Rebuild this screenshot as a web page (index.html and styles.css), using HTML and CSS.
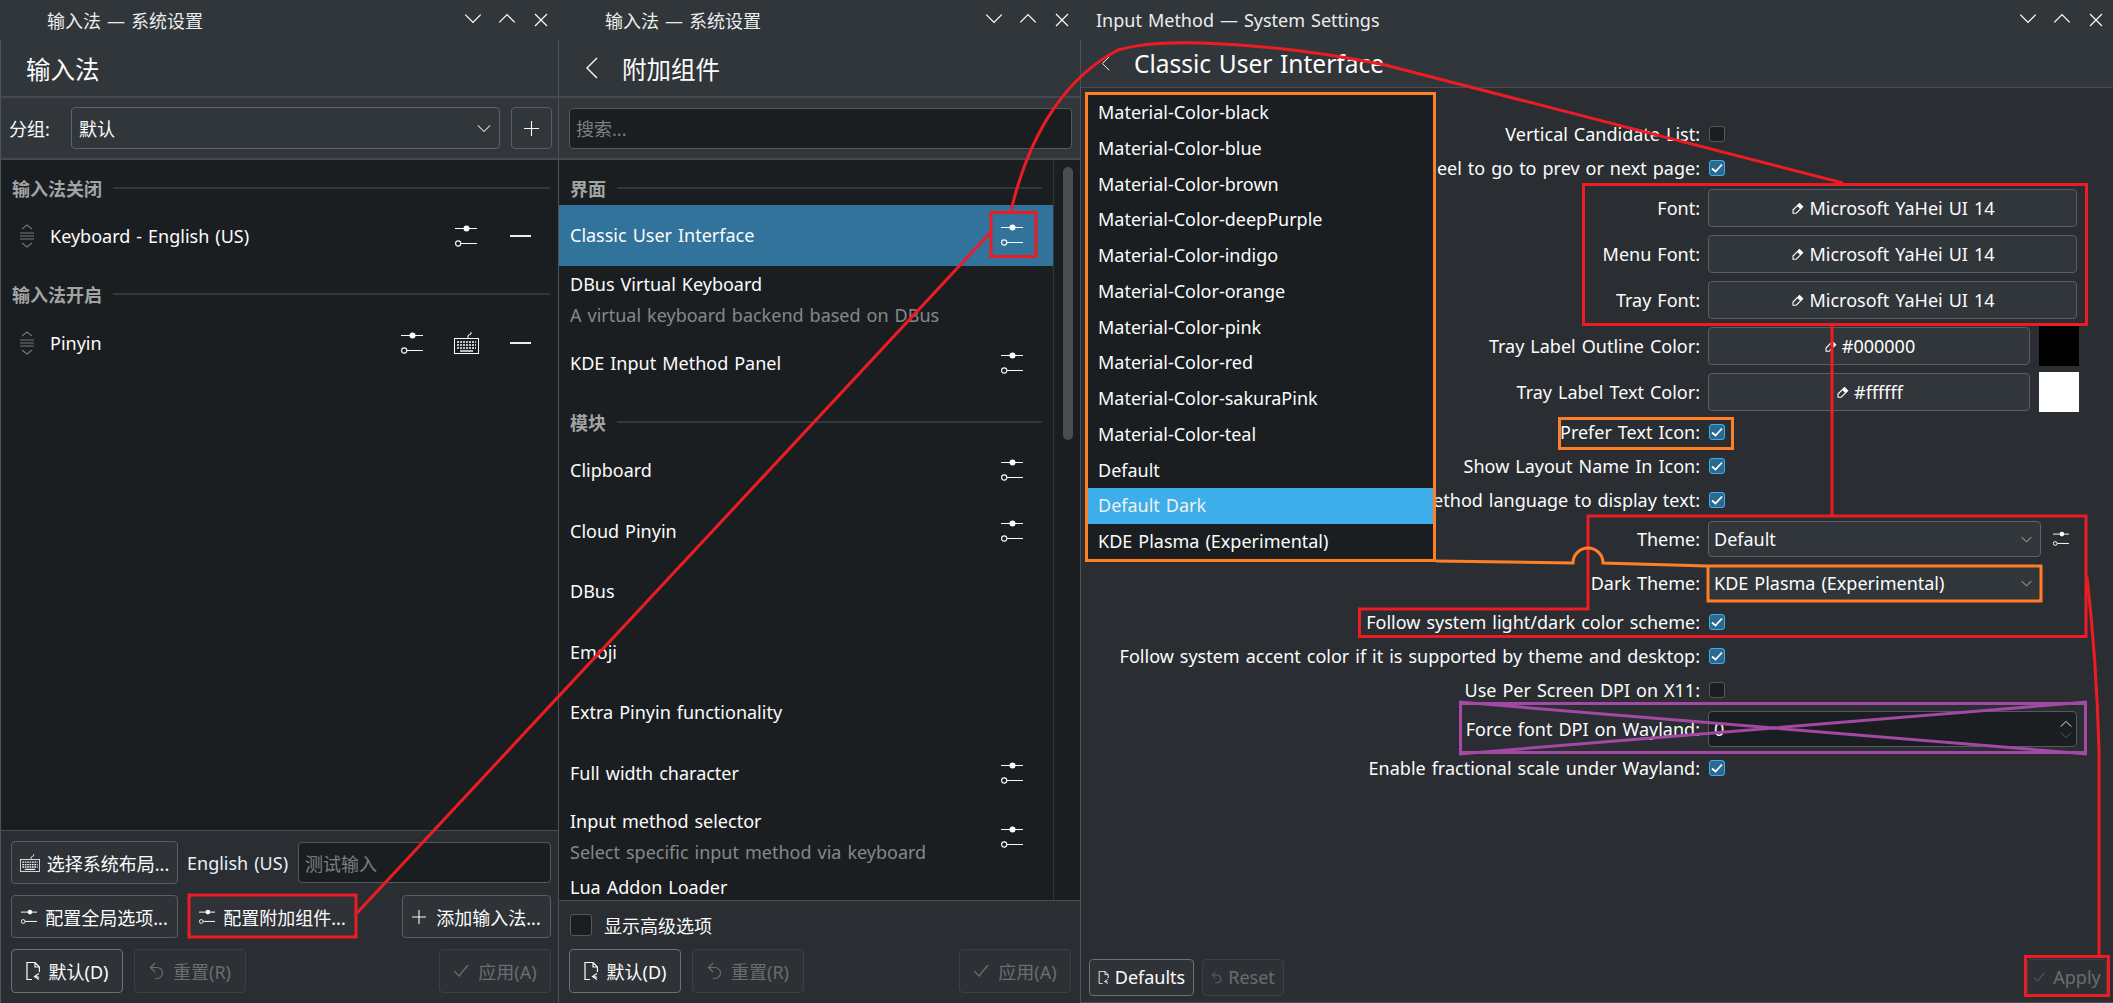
FILE: index.html
```html
<!DOCTYPE html>
<html lang="zh">
<head>
    <meta charset="utf-8">
    <title>Input Method — System Settings</title>
    <link rel="stylesheet" href="styles.css">
</head>

<body>
    <svg class="defs" width="0" height="0">
        <symbol id="i-down" viewBox="0 0 16 10"><path d="M1 1.5l7 7 7-7" fill="none" stroke="currentColor" stroke-width="1.2"/></symbol>
        <symbol id="i-up" viewBox="0 0 16 10"><path d="M1 8.5l7-7 7 7" fill="none" stroke="currentColor" stroke-width="1.2"/></symbol>
        <symbol id="i-close" viewBox="0 0 14 14"><path d="M1 1l12 12M13 1L1 13" fill="none" stroke="currentColor" stroke-width="1.2"/></symbol>
        <symbol id="i-back" viewBox="0 0 13 22"><path d="M12 1L2 11l10 10" fill="none" stroke="currentColor" stroke-width="1.4"/></symbol>
        <symbol id="i-config" viewBox="0 0 22 22"><path d="M0 3.5h22M6 18.5h16" stroke="currentColor" stroke-width="1.1" fill="none"/><circle cx="11.5" cy="3.5" r="3" fill="currentColor"/><circle cx="3.2" cy="18.5" r="2.6" fill="none" stroke="currentColor" stroke-width="1.1"/></symbol>
        <symbol id="i-config-s" viewBox="0 0 18 18"><path d="M6 3.5h12M0 3.5h6M4.5 14h13.5" stroke="currentColor" stroke-width="1.1" fill="none"/><circle cx="10" cy="3.5" r="2.6" fill="currentColor"/><circle cx="2.5" cy="14" r="2.1" fill="none" stroke="currentColor" stroke-width="1.1"/></symbol>
        <symbol id="i-kbd" viewBox="0 0 25 22"><path d="M14 6V3.5L17 2V0" fill="none" stroke="currentColor" stroke-width="1"/><rect x=".5" y="6.5" width="24" height="15" fill="none" stroke="currentColor"/><path d="M3 10h19M3 13h19M3 16h19" stroke="currentColor" stroke-width="1.6" stroke-dasharray="2 1" fill="none"/><path d="M6 19h13" stroke="currentColor" stroke-width="1.4"/></symbol>
        <symbol id="i-handle" viewBox="0 0 14 24"><path d="M2 5l5-4 5 4M2 19l5 4 5-4M0 9h14M0 12h14M0 15h14" fill="none" stroke="currentColor" stroke-width="1.1"/></symbol>
        <symbol id="i-plus" viewBox="0 0 16 16"><path d="M8 0v16M0 8h16" stroke="currentColor" stroke-width="1.2"/></symbol>
        <symbol id="i-revert" viewBox="0 0 14 18"><path d="M6 17.5H1V.5h8l4.5 4.5v5M9 .5V5h4.5" fill="none" stroke="currentColor" stroke-width="1.2"/><path d="M13 11.5l-4.5 3 4.5 3M8.8 14.5c2.2 0 3.5 0 4.2 1" fill="none" stroke="currentColor" stroke-width="1.1"/></symbol>
        <symbol id="i-undo" viewBox="0 0 15 18"><path d="M6 1L1.5 5.5 6 10M2 5.5h6a5.5 5.5 0 0 1 0 11H6" fill="none" stroke="currentColor" stroke-width="1.2"/></symbol>
        <symbol id="i-ok" viewBox="0 0 16 13"><path d="M1 7l5 5L15 1" fill="none" stroke="currentColor" stroke-width="1.2"/></symbol>
        <symbol id="i-pen" viewBox="0 0 12 12"><path d="M1 8l6.5-6.5 3.2 3.2L4.2 11.2H1z" fill="none" stroke="currentColor" stroke-width="1.1"/><path d="M5 3.8l3.2 3.2 2.5-2.5-3.2-3.2z" fill="currentColor"/></symbol>
        <symbol id="i-tick" viewBox="0 0 12 10"><path d="M1 5.5l3.5 3L11 1.5" fill="none" stroke="currentColor" stroke-width="1.8"/></symbol>
    </svg>

    <div class="desktop">
        <!-- window 1 -->
        <section class="win win-main">
            <header class="titlebar">
                <span class="title">输入法 — 系统设置</span>
                <div class="ctrls">
                    <svg class="ctrl"><use href="#i-down"/></svg>
                    <svg class="ctrl"><use href="#i-up"/></svg>
                    <svg class="ctrl ctrl_x"><use href="#i-close"/></svg>
                </div>
            </header>
            <div class="body body-left">
                <div class="page-head"><h1 class="heading">输入法</h1></div>
                <div class="tool-row group-row">
                    <span class="group-label">分组:</span>
                    <div class="combo combo-group"><span>默认</span><svg class="combo-arrow"><use href="#i-down"/></svg></div>
                    <button class="btn btn-square"><svg class="i-plus"><use href="#i-plus"/></svg></button>
                </div>
                <div class="list">
                    <div class="section section-first"><span>输入法关闭</span><i></i></div>
                    <div class="row im-row">
                        <svg class="handle"><use href="#i-handle"/></svg>
                        <span class="row-name">Keyboard - English (US)</span>
                        <span class="row-icon"><svg class="cfg"><use href="#i-config"/></svg></span>
                        <span class="row-icon"><i class="minus"></i></span>
                    </div>
                    <div class="section"><span>输入法开启</span><i></i></div>
                    <div class="row im-row">
                        <svg class="handle"><use href="#i-handle"/></svg>
                        <span class="row-name">Pinyin</span>
                        <span class="row-icon"><svg class="cfg"><use href="#i-config"/></svg></span>
                        <span class="row-icon"><svg class="kbd"><use href="#i-kbd"/></svg></span>
                        <span class="row-icon"><i class="minus"></i></span>
                    </div>
                </div>
                <div class="foot foot-main">
                    <div class="foot-row">
                        <button class="btn btn-long"><svg class="kbd"><use href="#i-kbd"/></svg>选择系统布局...</button>
                        <span class="layout-name">English (US)</span>
                        <div class="field test-input">测试输入</div>
                    </div>
                    <div class="foot-row">
                        <button class="btn btn-long"><svg class="cfg-s"><use href="#i-config-s"/></svg>配置全局选项...</button>
                        <button class="btn btn-long"><svg class="cfg-s"><use href="#i-config-s"/></svg>配置附加组件...</button>
                        <button class="btn btn-add"><svg class="i-plus"><use href="#i-plus"/></svg>添加输入法...</button>
                    </div>
                    <div class="foot-row">
                        <button class="btn btn-short btn-def"><svg class="i-doc"><use href="#i-revert"/></svg>默认(D)</button>
                        <button class="btn btn-short btn-off"><svg class="i-undo"><use href="#i-undo"/></svg>重置(R)</button>
                        <button class="btn btn-short btn-off btn-end"><svg class="i-ok"><use href="#i-ok"/></svg>应用(A)</button>
                    </div>
                </div>
            </div>
        </section>

        <!-- window 2 -->
        <section class="win win-addons">
            <header class="titlebar">
                <span class="title">输入法 — 系统设置</span>
                <div class="ctrls">
                    <svg class="ctrl"><use href="#i-down"/></svg>
                    <svg class="ctrl"><use href="#i-up"/></svg>
                    <svg class="ctrl ctrl_x"><use href="#i-close"/></svg>
                </div>
            </header>
            <div class="body body-both">
                <div class="page-head">
                    <svg class="back"><use href="#i-back"/></svg>
                    <h1 class="heading">附加组件</h1>
                </div>
                <div class="tool-row search-row">
                    <div class="field search">搜索...</div>
                </div>
                <div class="list list-addons">
                    <div class="addons">
                        <div class="section section-first"><span>界面</span><i></i></div>
                        <div class="row addon selected"><span class="row-name">Classic User Interface</span><svg class="cfg"><use href="#i-config"/></svg></div>
                        <div class="row addon addon-two">
                            <div class="row-name">DBus Virtual Keyboard<p class="desc">A virtual keyboard backend based on DBus</p></div>
                        </div>
                        <div class="row addon"><span class="row-name">KDE Input Method Panel</span><svg class="cfg"><use href="#i-config"/></svg></div>
                        <div class="section section-mid"><span>模块</span><i></i></div>
                        <div class="row addon"><span class="row-name">Clipboard</span><svg class="cfg"><use href="#i-config"/></svg></div>
                        <div class="row addon"><span class="row-name">Cloud Pinyin</span><svg class="cfg"><use href="#i-config"/></svg></div>
                        <div class="row addon"><span class="row-name">DBus</span></div>
                        <div class="row addon"><span class="row-name">Emoji</span></div>
                        <div class="row addon"><span class="row-name">Extra Pinyin functionality</span></div>
                        <div class="row addon"><span class="row-name">Full width character</span><svg class="cfg"><use href="#i-config"/></svg></div>
                        <div class="row addon addon-two">
                            <div class="row-name">Input method selector<p class="desc">Select specific input method via keyboard</p></div>
                            <svg class="cfg"><use href="#i-config"/></svg>
                        </div>
                        <div class="row addon addon-two addon-top">
                            <div class="row-name">Lua Addon Loader</div>
                        </div>
                    </div>
                    <div class="scroll-track"><div class="scroll-thumb"></div></div>
                </div>
                <div class="foot foot-addons">
                    <label class="adv"><span class="check check-big"></span>显示高级选项</label>
                    <div class="foot-row">
                        <button class="btn btn-short btn-def"><svg class="i-doc"><use href="#i-revert"/></svg>默认(D)</button>
                        <button class="btn btn-short btn-off"><svg class="i-undo"><use href="#i-undo"/></svg>重置(R)</button>
                        <button class="btn btn-short btn-off btn-end"><svg class="i-ok"><use href="#i-ok"/></svg>应用(A)</button>
                    </div>
                </div>
            </div>
        </section>

        <!-- window 3 -->
        <section class="win win-classic">
            <header class="titlebar">
                <span class="title">Input Method — System Settings</span>
                <div class="ctrls">
                    <svg class="ctrl"><use href="#i-down"/></svg>
                    <svg class="ctrl"><use href="#i-up"/></svg>
                    <svg class="ctrl ctrl_x"><use href="#i-close"/></svg>
                </div>
            </header>
            <div class="page-head head-small">
                <svg class="back back-small"><use href="#i-back"/></svg>
                <h1 class="heading">Classic User Interface</h1>
            </div>
            <div class="form">
                <div class="f-row"><label>Vertical Candidate List:</label><span class="check"></span></div>
                <div class="f-row"><label>Use mouse wheel to go to prev or next page:</label><span class="check on"><svg><use href="#i-tick"/></svg></span></div>
                <div class="f-row f-btn"><label>Font:</label><button class="btn btn-font"><svg class="pen"><use href="#i-pen"/></svg>Microsoft YaHei UI 14</button></div>
                <div class="f-row f-btn"><label>Menu Font:</label><button class="btn btn-font"><svg class="pen"><use href="#i-pen"/></svg>Microsoft YaHei UI 14</button></div>
                <div class="f-row f-btn"><label>Tray Font:</label><button class="btn btn-font"><svg class="pen"><use href="#i-pen"/></svg>Microsoft YaHei UI 14</button></div>
                <div class="f-row f-btn"><label>Tray Label Outline Color:</label><div class="color-pick"><button class="btn btn-font"><svg class="pen"><use href="#i-pen"/></svg>#000000</button><span class="swatch swatch-black"></span></div></div>
                <div class="f-row f-btn"><label>Tray Label Text Color:</label><div class="color-pick"><button class="btn btn-font"><svg class="pen"><use href="#i-pen"/></svg>#ffffff</button><span class="swatch swatch-white"></span></div></div>
                <div class="f-row"><label>Prefer Text Icon:</label><span class="check on"><svg><use href="#i-tick"/></svg></span></div>
                <div class="f-row"><label>Show Layout Name In Icon:</label><span class="check on"><svg><use href="#i-tick"/></svg></span></div>
                <div class="f-row"><label>Use input method language to display text:</label><span class="check on"><svg><use href="#i-tick"/></svg></span></div>
                <div class="f-row f-combo"><label>Theme:</label><div class="theme-pick"><div class="combo combo-theme"><span>Default</span><svg class="combo-arrow"><use href="#i-down"/></svg></div><svg class="cfg-s"><use href="#i-config-s"/></svg></div></div>
                <div class="f-row f-combo"><label>Dark Theme:</label><div class="theme-pick"><div class="combo combo-theme"><span>KDE Plasma (Experimental)</span><svg class="combo-arrow"><use href="#i-down"/></svg></div></div></div>
                <div class="f-row"><label>Follow system light/dark color scheme:</label><span class="check on"><svg><use href="#i-tick"/></svg></span></div>
                <div class="f-row"><label>Follow system accent color if it is supported by theme and desktop:</label><span class="check on"><svg><use href="#i-tick"/></svg></span></div>
                <div class="f-row"><label>Use Per Screen DPI on X11:</label><span class="check"></span></div>
                <div class="f-row f-combo"><label>Force font DPI on Wayland:</label><div class="spin"><span>0</span><div class="spin-btns"><svg class="spin-up"><use href="#i-up"/></svg><svg class="spin-down"><use href="#i-down"/></svg></div></div></div>
                <div class="f-row"><label>Enable fractional scale under Wayland:</label><span class="check on"><svg><use href="#i-tick"/></svg></span></div>
            </div>
            <div class="foot-classic">
                <button class="btn btn-small btn-def"><svg class="i-doc-s"><use href="#i-revert"/></svg>Defaults</button>
                <button class="btn btn-small btn-off"><svg class="i-undo-s"><use href="#i-undo"/></svg>Reset</button>
                <button class="btn btn-small btn-off btn-end"><svg class="i-ok-s"><use href="#i-ok"/></svg>Apply</button>
            </div>
            <ul class="theme-list">
                <li>Material-Color-black</li>
                <li>Material-Color-blue</li>
                <li>Material-Color-brown</li>
                <li>Material-Color-deepPurple</li>
                <li>Material-Color-indigo</li>
                <li>Material-Color-orange</li>
                <li>Material-Color-pink</li>
                <li>Material-Color-red</li>
                <li>Material-Color-sakuraPink</li>
                <li>Material-Color-teal</li>
                <li>Default</li>
                <li class="current">Default Dark</li>
                <li>KDE Plasma (Experimental)</li>
            </ul>
        </section>
    </div>

    <!-- hand drawn marks over the screenshot -->
    <svg class="marks" viewBox="0 0 2113 1003">
        <g class="mark-red">
            <rect x="189" y="895" width="167" height="42"/>
            <rect x="991" y="212.5" width="45" height="44"/>
            <path d="M357 913L990 233"/>
            <path d="M1011 211C1030 130 1068 76 1118 50C1145 42 1175 42 1202 43C1260 45 1320 52 1385 65L1843 183"/>
            <rect x="1583.5" y="184.5" width="503" height="140"/>
            <path d="M1832 325V515"/>
            <path d="M1588 516H2086V636.5H1359.5V609H1588Z"/>
            <path d="M2087 577C2092 620 2097 680 2099 750V955"/>
            <rect x="2025.5" y="956.5" width="83" height="39"/>
        </g>
        <g class="mark-orange">
            <rect x="1559.5" y="418.5" width="173" height="30"/>
            <path d="M1436 561L1573 563A15 15 0 0 1 1603 563L1707 566"/>
            <rect x="1708" y="566" width="333" height="35"/>
        </g>
        <g class="mark-purple">
            <rect x="1460.5" y="703.5" width="625" height="49"/>
            <path d="M1459 702L2087 754M1459 754L2087 702"/>
        </g>
    </svg>
</body>

</html>
```
FILE: styles.css
```css
* {
    box-sizing: border-box;
}

body {
    margin: 0;
    width: 2113px;
    height: 1003px;
    overflow: hidden;
    position: relative;
    font-family: "Noto Sans", "Noto Sans CJK SC", sans-serif;
    font-size: 18px;
    word-spacing: 1.3px;
    color: #fcfcfc;
    background-color: #2a2e32;
}

.defs {
    position: absolute;
}

.desktop {
    display: flex;
    height: 1003px;
}

.win {
    position: relative;
    display: flex;
    flex-direction: column;
    height: 1003px;
    background-color: #31363b;
}

.win-main {
    width: 558px;
}

.win-addons {
    width: 523px;
}

.win-classic {
    width: 1032px;
    background-color: #2a2e32;
    border-bottom: 1px solid #4a4e52;
}

.titlebar {
    display: flex;
    align-items: center;
    justify-content: space-between;
    height: 40px;
    flex: none;
    background-color: #31363b;
    color: #eceded;
}

.win-main .titlebar {
    padding-left: 47px;
    padding-right: 0;
}

.win-addons .titlebar {
    padding-left: 47px;
    padding-right: 2px;
}

.win-classic .titlebar {
    padding-left: 15px;
}

.ctrls {
    display: flex;
}

.ctrl {
    width: 34px;
    height: 11px;
    color: #fcfcfc;
}

.ctrl_x {
    height: 14px;
}

.body {
    flex: 1;
    display: flex;
    flex-direction: column;
    min-height: 0;
}

.body-left {
    border-left: 1px solid #4d5257;
}

.body-both {
    border-left: 1px solid #4d5257;
    border-right: 1px solid #4d5257;
}

.page-head {
    display: flex;
    align-items: center;
    height: 58px;
    flex: none;
    padding-left: 25px;
    border-bottom: 2px solid #45494e;
}

.heading {
    margin: 0;
    font-size: 24.5px;
    font-weight: 400;
}

.back {
    width: 13px;
    height: 22px;
    margin-left: 1px;
    margin-right: 24px;
}

.head-small {
    height: 48px;
    padding-left: 20px;
    border-bottom: 1px solid #4a4e52;
    background-color: #31363b;
}

.back-small {
    width: 9px;
    height: 15px;
    margin: 0 24px 0 0;
}

.tool-row {
    display: flex;
    align-items: center;
    height: 62px;
    flex: none;
    border-bottom: 2px solid #45494e;
}

.group-row {
    padding-left: 8px;
    padding-right: 5px;
}

.group-label {
    width: 62px;
}

.search-row {
    padding: 0 8px 0 10px;
}

.combo {
    display: flex;
    align-items: center;
    justify-content: space-between;
    border: 1px solid #5f6367;
    border-radius: 4px;
    background-color: #31363b;
}

.combo-group {
    width: 429px;
    height: 42px;
    flex: none;
    padding: 0 8px 0 7px;
    margin-right: 11px;
}

.combo-arrow {
    width: 14px;
    height: 9px;
    color: #d5d6d7;
}

.combo-theme .combo-arrow {
    width: 11px;
    height: 7px;
}

.field {
    display: flex;
    align-items: center;
    height: 41px;
    background-color: #1b1e20;
    border: 1px solid #55595d;
    border-radius: 4px;
    color: #7c7e80;
}

.search {
    width: 100%;
    padding-left: 6px;
}

.btn {
    display: flex;
    align-items: center;
    justify-content: center;
    font: inherit;
    word-spacing: inherit;
    color: #fcfcfc;
    background-color: #31363b;
    border: 1px solid #5a5e62;
    border-radius: 4px;
    padding: 0;
}

.btn-square {
    width: 41px;
    height: 42px;
    flex: none;
}

.i-plus {
    width: 15px;
    height: 15px;
}

.list {
    flex: 1;
    min-height: 0;
    background-color: #1b1e20;
    overflow: hidden;
}

.section {
    display: flex;
    align-items: center;
    height: 46px;
    padding: 10px 8px 0 11px;
    font-weight: 700;
    font-size: 18px;
    color: #a1a3a4;
}

.section i {
    flex: 1;
    height: 2px;
    margin-left: 11px;
    background-color: #33373a;
}

.section-first {
    height: 45px;
    padding-top: 11px;
}

.row {
    display: flex;
    align-items: center;
}

.im-row {
    height: 61px;
}

.handle {
    width: 14px;
    height: 24px;
    margin-left: 19px;
    margin-right: 16px;
    color: #75787a;
}

.row-name {
    flex: 1;
}

.row-icon {
    display: flex;
    justify-content: center;
    width: 54px;
}

.row-icon:last-child {
    margin-right: 11px;
}

.cfg {
    width: 22px;
    height: 22px;
}

.kbd {
    width: 25px;
    height: 22px;
}

.btn .kbd {
    width: 20px;
    height: 18px;
    margin-right: 2px;
}

.minus {
    display: block;
    width: 21px;
    height: 2px;
    background-color: #eceded;
}

.list-addons {
    display: flex;
}

.addons {
    width: 495px;
    flex: none;
    border-right: 1px solid #33373a;
}

.addons .section {
    padding-left: 11px;
    padding-right: 11px;
}

.section-mid {
    height: 47px;
}

.addon {
    height: 60.5px;
    padding: 0 30px 0 11px;
}

.addon-two {
    height: 67px;
}

.addon-top {
    align-items: flex-start;
    padding-top: 6px;
}

.selected {
    background-color: #31739b;
}

.desc {
    margin: 9px 0 0;
    line-height: 22px;
    color: #85888a;
}

.addon-two .row-name {
    line-height: 22px;
}

.scroll-track {
    flex: 1;
    padding: 7px 9px 0 9px;
}

.scroll-thumb {
    width: 10px;
    height: 273px;
    border-radius: 5px;
    background-color: #4a4e51;
}

.foot {
    flex: none;
    border-top: 1px solid #4a4e52;
    background-color: #2a2e32;
}

.foot-main {
    display: flex;
    flex-direction: column;
    gap: 11px;
    height: 173px;
    padding: 10px 7px 0 10px;
}

.foot-row {
    display: flex;
    align-items: center;
    height: 43px;
    gap: 11px;
}

.btn-long {
    width: 167px;
    height: 43px;
    flex: none;
    gap: 5px;
    background-color: #2f3338;
    white-space: nowrap;
}

.btn-add {
    width: 149px;
    height: 43px;
    flex: none;
    margin-left: auto;
    gap: 10px;
    background-color: #2f3338;
    white-space: nowrap;
}

.btn-add .i-plus {
    width: 14px;
    height: 14px;
}

.layout-name {
    width: 99px;
    flex: none;
    margin-left: -2px;
    margin-right: 1px;
    white-space: nowrap;
    color: #e8f0f8;
}

.test-input {
    width: 253px;
    padding-left: 6px;
}

.cfg-s {
    width: 16px;
    height: 16px;
    margin-right: 3px;
}

.btn-short {
    width: 112px;
    height: 44px;
    gap: 9px;
}

.btn-def {
    border-color: #6c7074;
    background-color: #2f3338;
}

.btn-off {
    color: #6a6d70;
    background-color: #2d3135;
    border-color: #3c4044;
}

.btn-end {
    margin-left: auto;
}

.i-doc {
    width: 14px;
    height: 18px;
}

.i-undo {
    width: 15px;
    height: 18px;
}

.i-ok {
    width: 16px;
    height: 13px;
}

.foot-addons {
    height: 103px;
    padding: 13px 9px 0 10px;
}

.adv {
    display: flex;
    align-items: center;
    gap: 12px;
    height: 22px;
    margin-bottom: 13px;
}

.check {
    display: flex;
    align-items: center;
    justify-content: center;
    width: 16px;
    height: 16px;
    margin-left: 1px;
    background-color: #1b1e20;
    border: 1px solid #55595d;
    border-radius: 3px;
}

.check-big {
    width: 22px;
    height: 22px;
}

.check.on {
    background-color: #2b6a90;
    border-color: #3daee9;
}

.check svg {
    width: 12px;
    height: 10px;
}

.form {
    flex: 1;
    padding-top: 29px;
}

.f-row {
    display: grid;
    grid-template-columns: 619px 369px;
    column-gap: 8px;
    align-items: center;
    height: 34px;
}

.f-row label {
    text-align: right;
    white-space: nowrap;
}

.f-btn {
    height: 46px;
}

.f-combo {
    height: 44px;
}

.btn-font {
    flex: 1;
    height: 38px;
    gap: 5px;
    font-size: 18px;
    padding-left: 2px;
}

.pen {
    width: 12px;
    height: 12px;
}

.color-pick {
    display: flex;
    align-items: center;
    gap: 9px;
    width: 371px;
}

.swatch {
    width: 40px;
    height: 40px;
    flex: none;
}

.swatch-black {
    background-color: #000;
}

.swatch-white {
    background-color: #fff;
}

.theme-pick {
    display: flex;
    align-items: center;
    gap: 12px;
}

.combo-theme {
    width: 333px;
    height: 36px;
    flex: none;
    padding: 0 8px 0 5px;
}

.spin {
    display: flex;
    align-items: center;
    justify-content: space-between;
    height: 36px;
    padding: 0 4px 0 5px;
    background-color: #1b1e20;
    border: 1px solid #55595d;
    border-radius: 4px;
}

.spin-btns {
    display: flex;
    flex-direction: column;
    gap: 3px;
}

.spin-up,
.spin-down {
    display: block;
    width: 12px;
    height: 8px;
}

.spin-down {
    color: #5d6063;
}

.foot-classic {
    display: flex;
    align-items: center;
    gap: 8px;
    flex: none;
    height: 46px;
    margin-bottom: 2px;
    padding: 0 6px 0 8px;
}

.btn-small {
    height: 37px;
    gap: 6px;
}

.btn-small.btn-def {
    width: 105px;
}

.btn-small.btn-off {
    width: 82px;
}

.btn-small.btn-end {
    width: 80px;
    gap: 8px;
}

.i-doc-s {
    width: 11px;
    height: 13px;
}

.i-undo-s {
    width: 11px;
    height: 13px;
}

.i-ok-s {
    width: 12px;
    height: 10px;
}

.theme-list {
    position: absolute;
    left: 4px;
    top: 92px;
    width: 351px;
    height: 470px;
    margin: 0;
    padding: 0;
    list-style: none;
    background-color: #1b1e20;
    border: 3px solid #ff7f27;
}

.theme-list li {
    height: 35.75px;
    line-height: 35.75px;
    padding-left: 10px;
}

.theme-list .current {
    background-color: #3daee9;
    color: #eff0f1;
}

.marks {
    position: absolute;
    left: 0;
    top: 0;
    width: 2113px;
    height: 1003px;
    pointer-events: none;
}

.marks g {
    fill: none;
    stroke-width: 3;
}

.mark-red {
    stroke: #ed1c24;
}

.mark-orange {
    stroke: #ff7f27;
}

.mark-purple {
    stroke: #a349a4;
}
```
